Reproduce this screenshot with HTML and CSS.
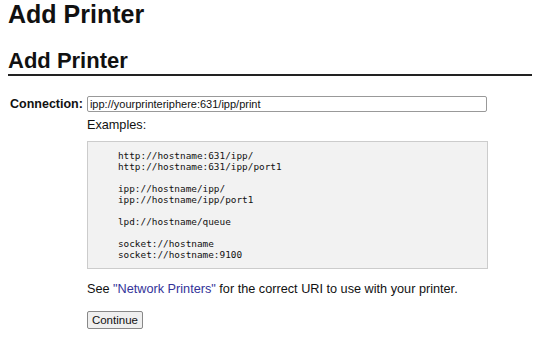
FILE: index.html
```html
<!DOCTYPE html>
<html lang="en">
<head>
  <meta charset="UTF-8">
  <title>Add Printer</title>
  <link rel="stylesheet" href="styles.css">
</head>
<body>

  <h1 class="title">Add Printer</h1>

  <h2 class="title-sub">Add Printer</h2>

  <form class="add-form" onsubmit="return false;">
    <table class="fields">
      <tr>
        <th class="label">Connection:</th>
        <td>
          <input type="text" class="uri" value="ipp://yourprinteriphere:631/ipp/print">
          <div class="hint">Examples:</div>
          <pre class="examples">http://hostname:631/ipp/
http://hostname:631/ipp/port1

ipp://hostname/ipp/
ipp://hostname/ipp/port1

lpd://hostname/queue

socket://hostname
socket://hostname:9100</pre>
          <p class="note">See <a href="#">"Network Printers"</a> for the correct URI to use with your printer.</p>
          <button class="btn">Continue</button>
        </td>
      </tr>
    </table>
  </form>

</body>
</html>
```

FILE: styles.css
```css
body {
  font-family: 'Liberation Sans', Arial, sans-serif;
  font-size: 12.7px;
  color: #111;
  background: #fff;
  margin: 0 8px;
}

.title {
  font-size: 25px;
  margin: 0;
}

.title-sub {
  font-size: 22px;
  margin: 20px -8px 0 0;
  padding-bottom: 1px;
  line-height: 24px;
  border-bottom: 2px solid #222;
}

.fields {
  border-collapse: collapse;
  margin-top: 20px;
}

.fields th,
.fields td {
  padding: 0;
  vertical-align: top;
}

.label {
  text-align: right;
  padding: 1px 4px 0 2px !important;
  font-size: 12.5px;
}

.uri {
  display: block;
  width: 400px;
  height: 16px;
  box-sizing: border-box;
  margin: 0;
  padding: 0 2px;
  border: 1px solid #999;
  border-radius: 2px;
  font-family: 'Liberation Sans', Arial, sans-serif;
  font-size: 11px;
  color: #111;
}

.hint {
  margin-top: 6px;
}

.examples {
  width: 401px;
  box-sizing: border-box;
  margin: 9px 0 0;
  padding: 8px 0 8px 30px;
  background: #f2f2f2;
  border: 1px solid #ccc;
  font-family: 'DejaVu Sans Mono', monospace;
  font-size: 9.4px;
  line-height: 11px;
  color: #111;
}

.note {
  margin: 13px 0 15px;
}

.note a {
  color: #333399;
  text-decoration: none;
}

.btn {
  font-family: 'Liberation Sans', Arial, sans-serif;
  font-size: 11.5px;
  padding: 2px 4px;
  background: #efefef;
  border: 1px solid #888;
  border-radius: 2px;
  color: #111;
}
```
